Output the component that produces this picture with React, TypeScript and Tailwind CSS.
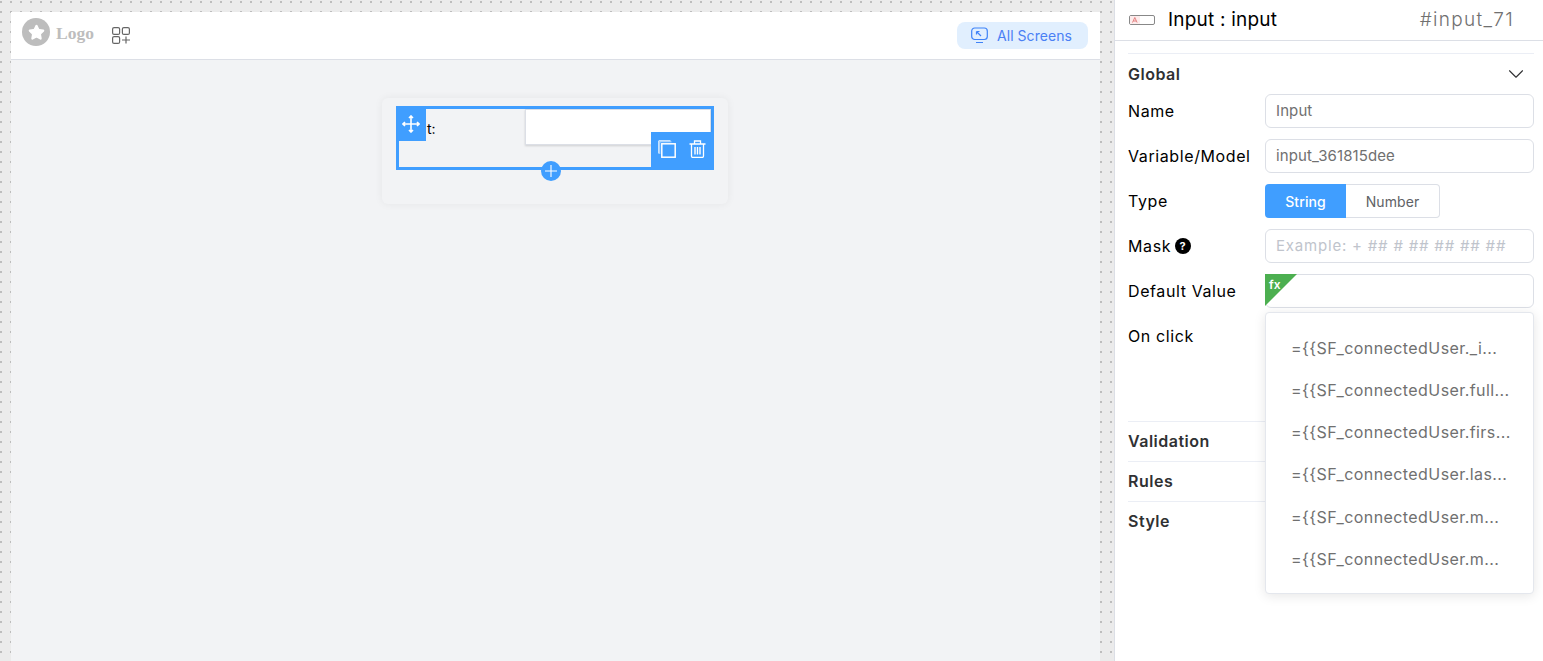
import { ChevronDown, Star } from "lucide-react";

const font = "font-['Inter','Noto_Sans',sans-serif]";

function Row({ label, children }: { label: React.ReactNode; children?: React.ReactNode }) {
  return (
    <div className="flex h-[34px] items-center mb-[11px]">
      <div className="w-[137px] shrink-0 text-[16px] text-black flex items-center gap-[4px] tracking-[0.6px]">{label}</div>
      {children}
    </div>
  );
}

function Field({ text }: { text: string }) {
  return (
    <div className="w-[269px] h-[34px] rounded-[6px] border border-[#dcdfe6] bg-white px-[10px] flex items-center text-[15px] tracking-[0.1px] whitespace-nowrap text-[#707070]">
      {text}
    </div>
  );
}

function Section({ label }: { label: string }) {
  return (
    <div className="h-10 pb-[2px] border-t border-[#ebeef5] flex items-center text-[16px] font-semibold text-[#303133] tracking-[0.5px]">{label}</div>
  );
}

const options = [
  "={{SF_connectedUser._i...",
  "={{SF_connectedUser.full...",
  "={{SF_connectedUser.firs...",
  "={{SF_connectedUser.las...",
  "={{SF_connectedUser.m...",
  "={{SF_connectedUser.m...",
];

export default function App() {
  return (
    <div className={`${font} w-[1543px] h-[661px] flex overflow-hidden bg-white`}>
      <div className="w-[1114px] h-full bg-[#ebebeb] bg-[radial-gradient(circle_at_1px_2px,#bdbdbd_1.2px,transparent_1.2px)] bg-[length:10px_10px] pl-[11px] pr-[14px] pt-[12px]">
        <div className="h-full flex flex-col bg-[#f2f3f5]">
          <div className="h-[48px] shrink-0 bg-white border-b border-[#dcdfe6] flex items-center pl-[11px] pr-[12px]">
            <div className="w-7 h-7 rounded-full bg-[#bdbdbd] flex items-center justify-center mt-[-7px]">
              <Star size={17} className="text-white fill-white" />
            </div>
            <span className="ml-[6px] mt-[-4px] font-['Liberation_Serif',serif] font-bold text-[17.5px] text-[#bdbdbd]">Logo</span>
            <svg width="18" height="17" viewBox="0 0 18 17" fill="none" stroke="#666" strokeWidth="1.2" className="ml-[18px]">
              <rect x="0.6" y="0.6" width="7" height="6.8" rx="1.5" />
              <rect x="10.4" y="0.6" width="7" height="6.8" rx="1.5" />
              <rect x="0.6" y="9.6" width="7" height="6.8" rx="1.5" />
              <path d="M10 13h8M14 9.5v7" />
            </svg>
            <div className="ml-auto h-[27px] w-[131px] rounded-[8px] bg-[#e1effe] flex items-center pl-[14px] gap-[9px] text-[14px] tracking-[0.05px] text-[#4a80f5]">
              <svg width="17" height="17" viewBox="0 0 17 17" fill="none" stroke="#3f83f8" strokeWidth="1.2">
                <rect x="0.7" y="1" width="15.6" height="11.5" rx="3" />
                <path d="M5 15.5h7M5.5 4.5l4.5 4.5M5.5 4.5h3M5.5 4.5v3" />
              </svg>
              All Screens
            </div>
          </div>
          <div className="flex-1 flex justify-center pt-[38px] pr-[1px]">
            <div className="w-[346px] h-[106px] rounded-[6px] bg-[#f2f3f5] shadow-[0_0_8px_rgba(0,0,0,0.06)] px-[14px] pt-[8px]">
              <div className="relative w-[318px] h-[64px] border-[3px] border-[#409eff]">
                <span className="absolute left-[28px] top-[9px] text-[14px] text-black">t:</span>
                <div className="absolute left-[126px] top-0 w-[186px] h-[36px] bg-white border border-[#dcdfe6] shadow-[0_1px_2px_rgba(0,0,0,0.15)]" />
                <div className="absolute -left-[3px] -top-[3px] w-[30px] h-[35px] bg-[#409eff] flex items-center justify-center">
                  <svg width="18" height="18" viewBox="0 0 18 18" fill="none" stroke="#fff" strokeWidth="1.6">
                    <path d="M9 1v16M1 9h16M7 3l2-2 2 2M7 15l2 2 2-2M3 7L1 9l2 2M15 7l2 2-2 2" />
                  </svg>
                </div>
                <div className="absolute -right-[3px] -bottom-[3px] w-[63px] h-[38px] bg-[#409eff] flex items-start pt-[8px] pl-[7px] gap-[13px]">
                  <svg width="18" height="18" viewBox="0 0 18 18" fill="none" stroke="#fff">
                    <path d="M12.5 0.8H0.8V13.5" strokeWidth="1" />
                    <path d="M13.5 1.8H1.8V14" strokeWidth="0.7" opacity="0.8" />
                    <rect x="3.8" y="3.8" width="13.4" height="13.4" strokeWidth="1.5" />
                  </svg>
                  <svg width="17" height="18" viewBox="0 0 17 18" fill="none" stroke="#fff" strokeWidth="1.3">
                    <path d="M0.5 4h16M5.5 4V1h6v3" />
                    <path d="M2.5 4v12a1.5 1.5 0 0 0 1.5 1.5h9a1.5 1.5 0 0 0 1.5-1.5V4" />
                    <path d="M6 7v7.5M8.5 7v7.5M11 7v7.5" strokeWidth="1.4" />
                  </svg>
                </div>
                <div className="absolute left-[142px] -bottom-[14px] w-5 h-5 rounded-full bg-[#409eff] flex items-center justify-center">
                  <svg width="12" height="12" viewBox="0 0 12 12" stroke="#fff" strokeWidth="1.1">
                    <path d="M6 0v12M0 6h12" />
                  </svg>
                </div>
              </div>
            </div>
          </div>
        </div>
      </div>

      <div className="w-[429px] h-full border-l border-[#dcdfe6] bg-white relative">
        <div className="h-[41px] border-b border-[#dcdfe6] flex items-center pl-[14px] pr-[29px]">
          <svg width="26" height="10" viewBox="0 0 26 10" fill="none">
            <rect x="0.5" y="0.5" width="25" height="9" rx="1.5" stroke="#888" />
            <rect x="1" y="1" width="10" height="8" fill="#fdecec" />
            <path d="M3.5 7.5L5.8 2.5L8.1 7.5M4.5 6h2.6" stroke="#d66" strokeWidth="0.8" />
          </svg>
          <span className="ml-[13px] text-[19px] text-black tracking-[0.2px]">Input : input</span>
          <span className="ml-auto text-[19px] font-light text-[#707070] tracking-[1.3px]">#input_71</span>
        </div>
        <div className="pl-[13px] pr-[9px] pt-[12px]">
          <div className="h-10 border-t border-[#ebeef5] flex items-center justify-between pr-[5px] text-[16px] font-semibold text-[#303133] tracking-[0.5px]">
            Global
            <ChevronDown size={26} strokeWidth={1} className="text-[#303133]" />
          </div>
          <div className="pt-[1px] h-[328px]">
            <Row label="Name"><Field text="Input" /></Row>
            <Row label="Variable/Model"><Field text="input_361815dee" /></Row>
            <Row label="Type">
              <div className="flex h-[34px] text-[14px] tracking-[0.1px]">
                <div className="w-[81px] rounded-l-[4px] bg-[#409eff] text-white flex items-center justify-center font-medium">String</div>
                <div className="w-[94px] rounded-r-[4px] border border-l-0 border-[#dcdfe6] text-[#606266] flex items-center justify-center">Number</div>
              </div>
            </Row>
            <Row label={<>Mask<svg width="16" height="16" viewBox="0 0 16 16"><circle cx="8" cy="8" r="8" fill="#000" /><text x="8" y="12" textAnchor="middle" fontSize="11" fontWeight="700" fill="#fff">?</text></svg></>}>
              <div className="w-[269px] h-[34px] rounded-[6px] border border-[#dcdfe6] bg-white px-[10px] flex items-center text-[15px] tracking-[0.8px] whitespace-nowrap text-[#c0c4cc]">
                Example: + ## # ## ## ## ##
              </div>
            </Row>
            <Row label="Default Value">
              <div className="relative w-[269px] h-[34px] rounded-[6px] border border-[#dcdfe6] bg-white">
                <div className="absolute -left-px -top-px w-[32px] h-[32px] bg-[#4caf50] [clip-path:polygon(0_0,100%_0,0_100%)]" />
                <span className="absolute left-[3px] top-[1px] text-[12px] font-semibold text-white">fx</span>
              </div>
            </Row>
            <Row label="On click" />
          </div>
          <Section label="Validation" />
          <Section label="Rules" />
          <Section label="Style" />
        </div>
        <div className="absolute left-[150px] top-[312px] w-[269px] h-[282px] rounded-[4px] bg-white border border-[#e4e7ed] shadow-[0_2px_12px_rgba(0,0,0,0.1)] pt-[14px] pl-[25px] text-[16px] tracking-[0.42px] text-[#707070] whitespace-nowrap">
          {options.map((t, i) => (
            <div key={i} className={`${i === 4 ? "h-[43px]" : "h-[42px]"} flex items-center`}>{t}</div>
          ))}
        </div>
      </div>
    </div>
  );
}
